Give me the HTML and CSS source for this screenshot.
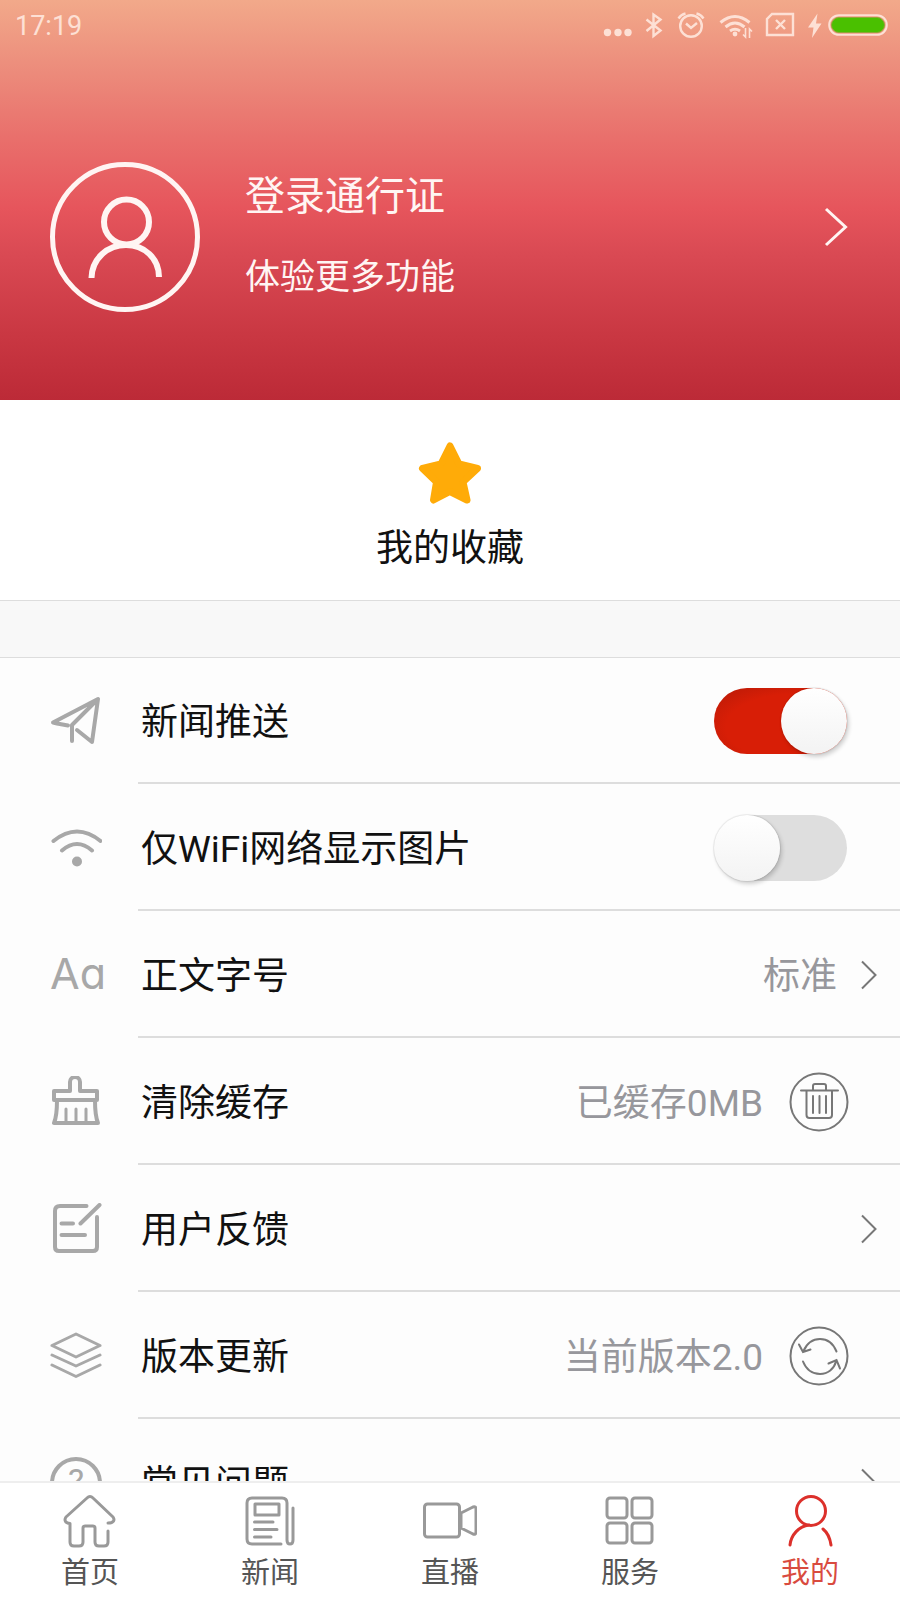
FILE: index.html
```html
<!DOCTYPE html>
<html lang="zh-CN">
<head>
<meta charset="utf-8">
<meta name="viewport" content="width=device-width, initial-scale=1">
<title>我的</title>
<link rel="stylesheet" href="styles.css">
</head>
<body>
<div class="app">
  <main class="content">
    <header class="hero">
      <div class="status">
        <time class="clock">17:19</time>
        <svg class="status-icons" width="288" height="30" viewBox="0 0 288 30" fill="none" stroke="currentColor" stroke-width="2.4" aria-hidden="true">
          <g fill="currentColor" stroke="none"><circle cx="7.500" cy="22.500" r="3.700"/><circle cx="18" cy="22.500" r="3.700"/><circle cx="28" cy="22.500" r="3.700"/></g>
          <path d="M46.500 9.500 60.500 20.500 53.500 26V4.500L60.500 9.500 46.500 21"/>
          <circle cx="91" cy="16" r="10.800"/><path d="M86 13.500l5 4.500 6-5M78.500 8.500q2.500-4 7-5M103.500 8.500q-2.500-4-7-5"/>
          <g stroke-width="3"><path d="M120.500 12.500Q135 .500 149.500 12.500M125.500 17Q135 9 144.500 17M130 21Q135 17.500 140 21"/></g>
          <circle cx="135" cy="24" r="2.400" fill="currentColor" stroke="none"/>
          <path d="M145.500 18v9l-2.500-2.500M149.500 28v-9l2.500 2.500" stroke-width="1.600"/>
          <path d="M172 4h21v21h-26V9zM176 10l9 9M185 10l-9 9"/>
          <path d="M217.500 3.500 208 17.500h5.500L212 28l9.500-14.500H216z" fill="currentColor" stroke="none"/>
          <rect x="229.200" y="5.200" width="57.600" height="19.600" rx="9.800" stroke-width="2"/>
          <rect x="231.500" y="7.500" width="53" height="15" rx="7.500" fill="#4ac000" stroke="#8ea637" stroke-width="1"/>
        </svg>
      </div>
      <a class="login" href="#login">
        <svg class="avatar" viewBox="0 0 150 150" fill="none" stroke="currentColor" aria-hidden="true">
          <circle cx="75" cy="75" r="72.500" stroke-width="5"/>
          <circle cx="76.500" cy="60" r="22.500" stroke-width="6"/>
          <path d="M41.500 116C42 96 58 83 76 83s33 13 33 32" stroke-width="6"/>
        </svg>
        <span class="login-text"><span class="login-title">登录通行证</span><span class="login-sub">体验更多功能</span></span>
        <svg class="login-arrow" viewBox="0 0 24 40" fill="none" stroke="currentColor" stroke-width="3" aria-hidden="true"><path d="M2 2l19.500 18L2 38"/></svg>
      </a>
    </header>

    <a class="favorites" href="#favorites">
      <svg class="star" viewBox="0 0 64 64" aria-hidden="true"><path d="M32 5l9 18 18.500 4.500-14.500 13.500 4 18L32 50.500 15.500 59l3-18L4.500 27.500 23 23z" fill="#ffab08" stroke="#ffab08" stroke-width="7" stroke-linejoin="round"/></svg>
      <span>我的收藏</span>
    </a>

    <ul class="settings">
      <li class="row">
        <svg class="row-icon" viewBox="0 0 52 52" aria-hidden="true"><path d="M18 30.500 7 28.500l-4-1L48 4 42 47 27 35M22 46V30L47 5"/></svg>
        <div class="row-body">
          <label class="row-name" for="push">新闻推送</label>
          <input class="switch" id="push" type="checkbox" role="switch" checked>
        </div>
      </li>
      <li class="row">
        <svg class="row-icon" viewBox="0 0 52 52" aria-hidden="true"><path d="M3.500 19q23.500-19 47 0M12 28.500q15-13 30 0"/><circle class="solid" cx="27" cy="39.500" r="5"/></svg>
        <div class="row-body">
          <label class="row-name" for="wifi">仅WiFi网络显示图片</label>
          <input class="switch" id="wifi" type="checkbox" role="switch">
        </div>
      </li>
      <li class="row">
        <span class="row-icon font-icon" aria-hidden="true">Aa</span>
        <a class="row-body" href="#font-size">
          <span class="row-name">正文字号</span>
          <span class="row-value">标准</span>
          <svg class="chevron" viewBox="0 0 16 30" aria-hidden="true"><path d="M1 1.500 14.500 15 1 28.500"/></svg>
        </a>
      </li>
      <li class="row">
        <svg class="row-icon" viewBox="0 0 52 52" aria-hidden="true"><path d="M4 15h16V6a5 5 0 0 1 10 0v9h17v9H4zM7 24c0 9 0 16-3 23h44c-3-7-3-14-3-23"/><path class="thin" d="M16 33v13M26 33v13M36 33v13"/></svg>
        <div class="row-body">
          <span class="row-name">清除缓存</span>
          <span class="row-value">已缓存0MB</span>
          <button class="round-button" type="button" aria-label="清除缓存">
            <svg viewBox="0 0 60 60" aria-hidden="true"><circle cx="30" cy="30" r="28.500"/><path d="M12 18.500h37M24 18v-4q0-2 2-2h9q2 0 2 2v4M17.500 19v24q0 3 3 3H40q3 0 3-3V19M24 24v17M30.500 24v17M37 24v17"/></svg>
          </button>
        </div>
      </li>
      <li class="row">
        <svg class="row-icon" viewBox="0 0 52 52" aria-hidden="true"><path d="M36.500 3H10q-5 0-5 5v36q0 4 4 4h34q4 0 4-4V14M49.500 2 30.500 20.500M11.500 20.500H23M11.500 32H35"/></svg>
        <a class="row-body" href="#feedback">
          <span class="row-name">用户反馈</span>
          <svg class="chevron" viewBox="0 0 16 30" aria-hidden="true"><path d="M1 1.500 14.500 15 1 28.500"/></svg>
        </a>
      </li>
      <li class="row">
        <svg class="row-icon" viewBox="0 0 52 52" aria-hidden="true"><path class="thin" d="M26 4 50 15.500 26 27 2 15.500zM2 25l24 11 24-11M2 35l24 11.500L50 35"/></svg>
        <div class="row-body">
          <span class="row-name">版本更新</span>
          <span class="row-value">当前版本2.0</span>
          <button class="round-button" type="button" aria-label="检查更新">
            <svg viewBox="0 0 60 60" aria-hidden="true"><circle cx="30" cy="30" r="28.500"/><path d="M47.500 25.500C44 17 38 13 31 13c-8 0-13 4-16.500 12M10 18.500l4 7.500 7.500-2.500M14 35.500C17 43 23 48 31 48c8 0 14-5 16-12.500M39.500 37.500l8-3.500 3.500 8.500"/></svg>
          </button>
        </div>
      </li>
      <li class="row">
        <span class="row-icon help-icon" aria-hidden="true">?</span>
        <a class="row-body" href="#faq">
          <span class="row-name">常见问题</span>
          <svg class="chevron" viewBox="0 0 16 30" aria-hidden="true"><path d="M1 1.500 14.500 15 1 28.500"/></svg>
        </a>
      </li>
    </ul>
  </main>

  <nav class="tabs" aria-label="主导航">
    <a class="tab" href="#home"><svg viewBox="0 0 54 54" aria-hidden="true"><path d="M7 29.500V48q0 4 4 4h5q4 0 4-4V34q0-2 2-2h8q2 0 2 2v14q0 4 4 4h5q4 0 4-4V37M45 29c6 0 7-3 5-6L30 4q-3-3-6 0L3 23c-2 3-1 6 4 6.500"/></svg><span>首页</span></a>
    <a class="tab" href="#news"><svg viewBox="0 0 54 54" aria-hidden="true"><path d="M38 50H9q-5 0-5-5V9q0-5 5-5h30q5 0 5 5v37q0 4 3 4t3-4V14"/><path d="M12 10h24v11H12zM11.500 28H30M11.500 35.500H34M11.500 43H28"/></svg><span>新闻</span></a>
    <a class="tab" href="#live"><svg viewBox="0 0 54 54" aria-hidden="true"><rect x="1.500" y="10" width="35" height="33" rx="3"/><path d="M38 19l12-6q3-1 3 2v23q0 3-3 2l-12-6z"/></svg><span>直播</span></a>
    <a class="tab" href="#service"><svg viewBox="0 0 54 54" aria-hidden="true"><rect x="4" y="4" width="20" height="20" rx="3"/><rect x="29" y="4" width="20" height="20" rx="3"/><rect x="4" y="29" width="20" height="20" rx="3"/><rect x="29" y="29" width="20" height="20" rx="3"/></svg><span>服务</span></a>
    <a class="tab tab-active" href="#me" aria-current="page"><svg viewBox="0 0 54 54" aria-hidden="true"><circle cx="28" cy="17" r="14.500"/><path d="M7 51c1-10 9-19 19-20M40 35c5 4 7 9 8 16"/></svg><span>我的</span></a>
  </nav>
</div>
</body>
</html>
```
FILE: styles.css
```css
* {
  box-sizing: border-box;
}

body {
  margin: 0;
  color: #111;
  background: #fdfdfd;
  font-family: Roboto, "Noto Sans CJK SC", sans-serif;
  font-size: 37px;
  line-height: 54px;
}

a {
  color: inherit;
  text-decoration: none;
}

.app {
  display: flex;
  flex-direction: column;
  height: 100vh;
}

.content {
  flex: 1;
  min-height: 0;
  overflow-y: auto;
  scrollbar-width: none;
}

.hero {
  padding-bottom: 88px;
  color: #fff5f3;
  background: linear-gradient(#f2a98a 0%, #ec8b7b 18%, #e9706c 34%, #e6555c 52%, #d94953 64%, #c93742 84%, #bc2a37 100%);
}

.status {
  display: flex;
  align-items: center;
  justify-content: space-between;
  height: 50px;
  padding: 0 12px 0 15px;
  color: #fde0d5;
}

.clock {
  padding-top: 2px;
  font-size: 27px;
}

.login {
  display: flex;
  align-items: center;
  margin-top: 112px;
  padding: 0 52px 0 50px;
}

.avatar {
  width: 150px;
  height: 150px;
}

.login-text {
  display: flex;
  flex: 1;
  flex-direction: column;
  gap: 27px;
  margin-left: 45px;
}

.login-title {
  font-size: 40px;
}

.login-sub {
  font-size: 35px;
}

.login-arrow {
  width: 24px;
  height: 40px;
  margin-bottom: 20px;
}

.favorites {
  display: flex;
  flex-direction: column;
  align-items: center;
  gap: 17px;
  height: 201px;
  padding-top: 41px;
  background: #fff;
}

.star {
  width: 64px;
  height: 64px;
}

.settings {
  margin: 0;
  padding: 0;
  border-top: 56px solid #f8f8f8;
  list-style: none;
  box-shadow: inset 0 1px #ddd, 0 -1px #ddd;
}

.row {
  display: flex;
  align-items: center;
  height: 127px;
  padding-left: 50px;
}

.row-icon {
  width: 52px;
  height: 52px;
  margin-right: 36px;
  color: #a8a8a8;
  fill: none;
  stroke: currentColor;
  stroke-width: 4;
  stroke-linecap: round;
  stroke-linejoin: round;
}

.row-icon .thin {
  stroke-width: 3;
}

.row-icon .solid {
  fill: currentColor;
  stroke: none;
}

.font-icon {
  font-family: Inter, sans-serif;
  font-size: 43px;
  font-weight: 400;
  font-feature-settings: "cv11";
  line-height: 48px;
  white-space: nowrap;
}

.help-icon {
  border: 4px solid #a8a8a8;
  border-radius: 50%;
  font-size: 34px;
  line-height: 40px;
  text-align: center;
}

.row-body {
  display: flex;
  flex: 1;
  align-items: center;
  align-self: stretch;
  padding: 2px 51px 0 3px;
  border-bottom: 2px solid #ddd;
}

a.row-body {
  padding-right: 23px;
}

.row-name {
  flex: 1;
  padding-top: 4px;
}

.row-value {
  padding-top: 4px;
  color: #97979c;
}

.chevron {
  width: 16px;
  height: 30px;
  margin-left: 24px;
  fill: none;
  stroke: #777;
  stroke-width: 2;
}

.round-button {
  width: 60px;
  height: 60px;
  margin-left: 26px;
  padding: 0;
  border: 0;
  background: none;
}

.round-button svg {
  display: block;
  fill: none;
  stroke: #777;
  stroke-width: 2;
  stroke-linecap: round;
}

.switch {
  width: 133px;
  height: 66px;
  margin: 0 2px 0 0;
  border-radius: 33px;
  background: #dedede;
  appearance: none;
}

.switch::before {
  display: block;
  width: 66px;
  height: 66px;
  border-radius: 50%;
  background: linear-gradient(#fff, #f3f3f3);
  box-shadow: 2px 3px 4px rgba(0, 0, 0, 0.18), 0 0 1px 1px rgba(0, 0, 0, 0.08);
  content: "";
}

.switch:checked {
  background: linear-gradient(rgba(130, 10, 0, 0.5), transparent 14%), #d81e06;
  background: radial-gradient(ellipse at 60% 60%, #d81e06 60%, #b51a08 100%);
}

.switch:checked::before {
  margin-left: auto;
}

.tabs {
  display: flex;
  height: 119px;
  border-top: 2px solid #eee;
  background: #fff;
}

.tab {
  display: flex;
  flex: 1;
  flex-direction: column;
  align-items: center;
  gap: 4px;
  padding-top: 11px;
  color: #555;
  font-size: 29px;
  line-height: 42px;
}

.tab svg {
  width: 54px;
  height: 54px;
  fill: none;
  stroke: #999;
  stroke-width: 3;
  stroke-linecap: round;
  stroke-linejoin: round;
}

.tab-active {
  color: #d94b3f;
}

.tab-active svg {
  stroke: #dc302b;
}
```
